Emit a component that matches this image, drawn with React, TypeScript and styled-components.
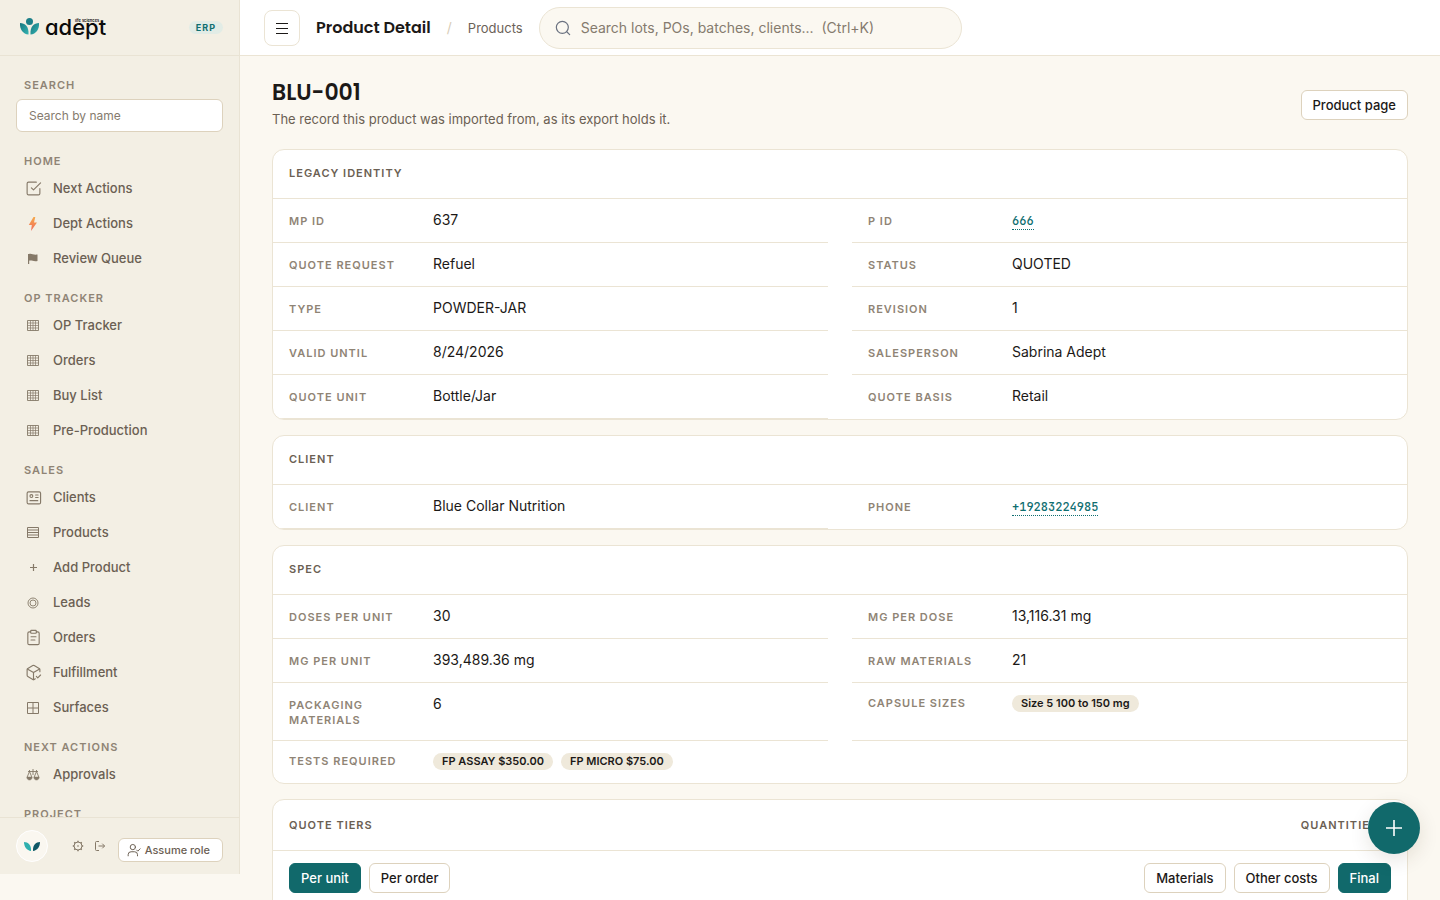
import React from "react";
import styled, { createGlobalStyle, css } from "styled-components";

const color = {
  page: "#fbf8f1",
  side: "#f3efe4",
  sideLine: "#e9e3d4",
  line: "#ebe4d4",
  control: "#ddd2bd",
  ink: "#1c1917",
  text: "#6b6053",
  label: "#8f8475",
  heading: "#6b6053",
  teal: "#11696b",
  link: "#0f6e70",
  chip: "#efe9db",
};

const sans = `Inter, "Liberation Sans", sans-serif`;
const display = `Poppins, Inter, "Liberation Sans", sans-serif`;
const mono = `"JetBrains Mono", "DejaVu Sans Mono", "Liberation Mono", monospace`;

const GlobalStyle = createGlobalStyle`
  *, *::before, *::after { box-sizing: border-box; }
  body { margin: 0; background: ${color.page}; color: ${color.ink}; font: 400 14px/20px ${sans}; }
  button, input { font: inherit; color: inherit; margin: 0; }
  h1, h2, p, dl, dd, ul { margin: 0; padding: 0; }
  ul { list-style: none; }
`;

const Shell = styled.div`
  display: flex;
  height: 100vh;
  overflow: hidden;
`;

const Sidebar = styled.aside`
  flex: 0 0 240px;
  height: calc(100vh - 26px);
  display: flex;
  flex-direction: column;
  background: ${color.side};
  border-right: 1px solid ${color.sideLine};
`;

const Brand = styled.div`
  flex: none;
  height: 56px;
  display: flex;
  align-items: center;
  justify-content: space-between;
  padding: 0 16px 0 20px;
  border-bottom: 1px solid ${color.sideLine};
`;

const ErpTag = styled.span`
  padding: 0 7px;
  border-radius: 7px;
  background: #e2ece6;
  color: ${color.link};
  font-size: 9px;
  line-height: 13px;
  font-weight: 700;
  letter-spacing: 1px;
`;

const SideScroll = styled.nav`
  flex: 1;
  min-height: 0;
  overflow: hidden;
  padding: 19px 16px 0;
`;

const SideLabel = styled.h2`
  display: block;
  padding: 2px 0 0 8px;
  color: ${color.label};
  font-size: 11px;
  line-height: 17px;
  font-weight: 600;
  letter-spacing: 1px;
  text-transform: uppercase;
`;

const SideSearch = styled.input`
  display: block;
  width: 100%;
  height: 33px;
  margin: 5px 0 19px;
  padding: 0 12px;
  border: 1px solid ${color.control};
  border-radius: 6px;
  background: #fff;
  font-size: 12px;
  &::placeholder { color: #857b6e; opacity: 1; }
`;

const NavGroup = styled.section`
  margin-bottom: 13px;
`;

const NavLink = styled.a`
  display: flex;
  align-items: center;
  gap: 11px;
  height: 35px;
  padding-left: 8px;
  color: ${color.text};
  font-size: 13px;
  font-weight: 500;
  text-decoration: none;
`;

const IconSlot = styled.span`
  flex: none;
  width: 18px;
  height: 20px;
  padding-top: 2px;
  display: grid;
  place-items: center;
  color: #857968;
  svg { display: block; }
`;

const SideFooter = styled.div`
  flex: none;
  height: 57px;
  display: flex;
  align-items: center;
  padding: 0 16px;
  border-top: 1px solid ${color.sideLine};
`;

const Avatar = styled.span`
  width: 32px;
  height: 32px;
  margin-right: 24px;
  display: grid;
  place-items: center;
  border: 1px solid #fff;
  border-radius: 50%;
  background: #faf7f0;
`;

const IconButton = styled.button`
  width: 12px;
  height: 20px;
  margin-right: 10px;
  padding: 0;
  display: grid;
  place-items: center;
  border: 0;
  background: none;
  color: #857968;
`;

const RoleButton = styled.button`
  display: flex;
  align-items: center;
  gap: 4px;
  height: 24px;
  margin: 7px 0 0 auto;
  padding: 0 12px 0 8px;
  border: 1px solid ${color.control};
  border-radius: 6px;
  background: #fff;
  color: ${color.text};
  font-size: 11px;
  font-weight: 500;
  white-space: nowrap;
`;

const Content = styled.div`
  flex: 1;
  min-width: 0;
  display: flex;
  flex-direction: column;
`;

const Topbar = styled.header`
  flex: none;
  height: 56px;
  display: flex;
  align-items: center;
  gap: 16px;
  padding: 0 24px;
  background: #fff;
  border-bottom: 1px solid ${color.line};
`;

const MenuButton = styled.button`
  width: 36px;
  height: 36px;
  padding: 0;
  display: grid;
  place-items: center;
  border: 1px solid ${color.line};
  border-radius: 8px;
  background: #fff;
`;

const TopTitle = styled.span`
  font-family: ${display};
  font-size: 16px;
  font-weight: 600;
  line-height: 24px;
  white-space: nowrap;
`;

const Slash = styled.span`
  color: #d8cdb8;
`;

const Crumb = styled.a`
  color: #6b6257;
  font-size: 13px;
  text-decoration: none;
`;

const GlobalSearch = styled.label`
  flex: 0 1 423px;
  height: 42px;
  display: flex;
  align-items: center;
  gap: 10px;
  padding: 0 15px;
  border: 1px solid ${color.line};
  border-radius: 21px;
  background: ${color.page};
  color: #6b7280;
  svg { flex: none; }
  input {
    flex: 1;
    min-width: 0;
    padding: 0;
    border: 0;
    outline: 0;
    background: none;
  }
  input::placeholder { color: #857b6e; opacity: 1; }
`;

const Main = styled.main`
  flex: 1;
  min-height: 0;
  overflow-y: auto;
  scrollbar-width: none;
  padding: 21px 32px 32px;
`;

const PageHead = styled.div`
  display: flex;
  align-items: center;
  justify-content: space-between;
  margin-bottom: 16px;
`;

const PageTitle = styled.h1`
  font-family: ${display};
  font-size: 22px;
  line-height: 32px;
  font-weight: 600;
`;

const PageNote = styled.p`
  padding-bottom: 3px;
  color: ${color.heading};
  font-size: 13px;
  line-height: 21px;
`;

const Button = styled.button<{ $primary?: boolean }>`
  height: 30px;
  padding: 0 11px;
  border: 1px solid ${color.control};
  border-radius: 6px;
  background: #fff;
  color: ${color.ink};
  font-size: 13px;
  line-height: 20px;
  font-weight: 500;
  white-space: nowrap;
  ${(p) =>
    p.$primary &&
    css`
      border-color: ${color.teal};
      background: ${color.teal};
      color: #fff;
    `}
`;

const Cards = styled.div`
  display: grid;
  gap: 15px;
`;

const Card = styled.section`
  overflow: hidden;
  border: 1px solid ${color.line};
  border-radius: 12px;
  background: #fff;
`;

const CardHead = styled.div<{ $tall?: boolean }>`
  display: flex;
  align-items: center;
  justify-content: space-between;
  height: ${(p) => (p.$tall ? 51 : 49)}px;
  padding: 0 16px ${(p) => (p.$tall ? 0 : 2)}px;
  border-bottom: 1px solid ${color.line};
`;

const capsText = css`
  font-size: 11px;
  line-height: 15px;
  font-weight: 600;
  letter-spacing: 1px;
  text-transform: uppercase;
`;

const CardTitle = styled.h2`
  ${capsText}
  color: ${color.heading};
`;

const GhostButton = styled.button`
  padding: 0 12px;
  border: 1px solid transparent;
  background: none;
  && { ${capsText} color: ${color.heading}; }
`;

const Fields = styled.dl`
  display: grid;
  grid-template-columns: 1fr 1fr;
  column-gap: 24px;
`;

const Field = styled.div`
  display: grid;
  grid-template-columns: 128px 1fr;
  column-gap: 16px;
  align-items: start;
  padding: 11px 16px 12px;
  border-bottom: 1px solid ${color.line};
  &:last-child { border-bottom: 0; }
  dt {
    ${capsText}
    padding-top: 4px;
    color: ${color.label};
  }
  dd { line-height: 20px; }
`;

const ChipField = styled(Field)`
  padding: 12px 16px 13px;
  dt { padding-top: 1px; }
  dd { display: flex; gap: 8px; line-height: 17px; }
`;

const Chip = styled.span`
  padding: 0 9px;
  border-radius: 9px;
  background: ${color.chip};
  font-size: 11px;
  line-height: 17px;
  font-weight: 600;
`;

const MonoLink = styled.a`
  border-bottom: 1px dotted ${color.link};
  color: ${color.link};
  font: 500 12px/17px ${mono};
  text-decoration: none;
`;

const Toolbar = styled.div`
  display: flex;
  justify-content: space-between;
  padding: 12px 16px 60px;
`;

const ButtonRow = styled.div`
  display: flex;
  gap: 8px;
`;

const Fab = styled.button`
  position: fixed;
  right: 20px;
  bottom: 46px;
  width: 52px;
  height: 52px;
  padding: 0;
  display: grid;
  place-items: center;
  border: 0;
  border-radius: 50%;
  background: ${color.teal};
  color: #fff;
  box-shadow: 0 6px 20px rgba(60, 40, 20, 0.12);
`;

const LogoMark = styled.svg`
  display: block;
  overflow: visible;
`;

const Wordmark = styled.text`
  font-family: ${sans};
  font-size: 22px;
  font-weight: 500;
  font-feature-settings: "cv11";
  fill: #0b0b0b;
`;

const Tagline = styled.text`
  font-family: ${sans};
  font-size: 4px;
  font-weight: 600;
  fill: #0b0b0b;
`;

const Stroke = ({ size = 17, width = 1.6, children }: { size?: number; width?: number; children: React.ReactNode }) => (
  <svg width={size} height={size} viewBox="0 0 24 24" fill="none" stroke="currentColor" strokeWidth={width} strokeLinecap="round" strokeLinejoin="round" aria-hidden="true">
    {children}
  </svg>
);

const Logo = () => (
  <LogoMark width="92" height="28" viewBox="0 0 92 28" role="img" aria-label="adept life sciences">
    <defs>
      <linearGradient id="leaf" x1="0" y1="0" x2="1" y2="1">
        <stop offset="0" stopColor="#17767f" />
        <stop offset="1" stopColor="#35b5b3" />
      </linearGradient>
    </defs>
    <circle cx="9.5" cy="7.5" r="3.5" fill="#1c7f88" />
    <path d="M0 9C5 9.500 9 12 8.500 20.500C3 20-.5 15.500 0 9Z" fill="url(#leaf)" />
    <path d="M19 9C14 9.500 10 12 10.500 20.500C16 20 19.500 15.500 19 9Z" fill="url(#leaf)" />
    <Wordmark x="25" y="21">adept</Wordmark>
    <Tagline x="55" y="8">life sciences</Tagline>
  </LogoMark>
);

const icons: Record<string, React.ReactNode> = {
  check: (
    <Stroke>
      <path d="m9 11 3 3L22 4" />
      <path d="M21 12v7a2 2 0 0 1-2 2H5a2 2 0 0 1-2-2V5a2 2 0 0 1 2-2h11" />
    </Stroke>
  ),
  bolt: (
    <svg width="14" height="16" viewBox="0 0 14 16" aria-hidden="true">
      <defs>
        <linearGradient id="bolt" x1="0" y1="0" x2="0" y2="1">
          <stop offset="0" stopColor="#f5a94a" />
          <stop offset="1" stopColor="#f26b5e" />
        </linearGradient>
      </defs>
      <path d="M7.500 1 2.800 9h3L5 15l6-8.500H8L9.300 1Z" fill="url(#bolt)" />
    </svg>
  ),
  flag: (
    <svg width="12" height="12" viewBox="0 0 12 12" fill="currentColor" aria-hidden="true">
      <path d="M1 1h1.200v10H1zM2 1c3-.8 4 1.200 8.500.5v6.500C6 8.700 5 7 2 7.700Z" />
    </svg>
  ),
  grid: (
    <svg width="12" height="11" viewBox="0 0 12 11" stroke="currentColor" fill="none" aria-hidden="true">
      <path d="M.5.5h11v10H.5z" strokeWidth="0.9" />
      <path d="M3.500.5v10M6 .5v10M8.500.5v10M.5 3h11M.5 5.500h11M.5 8h11" strokeWidth="0.7" />
    </svg>
  ),
  rows: (
    <svg width="12" height="11" viewBox="0 0 12 11" stroke="currentColor" fill="none" aria-hidden="true">
      <path d="M.5.5h11v10H.5z" />
      <path d="M.5 3h11M.5 5.500h11M.5 8h11" />
    </svg>
  ),
  ring: (
    <svg width="12" height="12" viewBox="0 0 12 12" stroke="currentColor" fill="none" aria-hidden="true">
      <circle cx="6" cy="6" r="5" strokeWidth="0.9" />
      <circle cx="6" cy="6" r="3" strokeWidth="0.9" />
    </svg>
  ),
  plus: (
    <svg width="9" height="9" viewBox="0 0 9 9" stroke="currentColor" strokeWidth="1.2" fill="none" aria-hidden="true">
      <path d="M4.500 1v7M1 4.500h7" />
    </svg>
  ),
  id: (
    <Stroke>
      <rect x="3" y="4" width="19" height="17" rx="2" />
      <circle cx="9" cy="10" r="2" />
      <path d="M15 8.500h3.500M15 12h3.500M7 16.500h11" />
    </Stroke>
  ),
  clipboard: (
    <Stroke>
      <rect x="8" y="2" width="8" height="4" rx="1" />
      <path d="M16 4h2a2 2 0 0 1 2 2v14a2 2 0 0 1-2 2H6a2 2 0 0 1-2-2V6a2 2 0 0 1 2-2h2M8.500 11h7M8.500 15.500h5.500" />
    </Stroke>
  ),
  box: (
    <Stroke>
      <path d="M21 11V8a2 2 0 0 0-1-1.730l-7-4a2 2 0 0 0-2 0l-7 4A2 2 0 0 0 3 8v8a2 2 0 0 0 1 1.730l7 4a2 2 0 0 0 2 0l1.500-.9" />
      <path d="M3.300 7 12 12l8.700-5M12 22V12M16 17.500l2 2 4-4" />
    </Stroke>
  ),
  window: (
    <svg width="14" height="14" viewBox="0 0 14 14" stroke="currentColor" fill="none" aria-hidden="true">
      <path d="M1.500 1.500h11v11h-11zM7 1.500v11M1.500 7h11" />
    </svg>
  ),
  scales: (
    <svg width="14" height="12" viewBox="0 0 14 12" stroke="currentColor" fill="none" aria-hidden="true">
      <path d="M7 0v6M2 2.500h10M3.500 2.500 1.200 8M3.500 2.500 5.800 8M10.500 2.500 8.200 8M10.500 2.500 12.800 8M3.500 1v2M10.500 1v2" strokeWidth="0.9" />
      <path d="M.8 8h5.400c0 4-5.400 4-5.400 0ZM7.800 8h5.400c0 4-5.400 4-5.400 0Z" fill="currentColor" strokeWidth="0.5" />
    </svg>
  ),
};

const groups: { title: string; items: [string, string][] }[] = [
  { title: "Home", items: [["check", "Next Actions"], ["bolt", "Dept Actions"], ["flag", "Review Queue"]] },
  { title: "OP Tracker", items: [["grid", "OP Tracker"], ["grid", "Orders"], ["grid", "Buy List"], ["grid", "Pre-Production"]] },
  {
    title: "Sales",
    items: [
      ["id", "Clients"],
      ["rows", "Products"],
      ["plus", "Add Product"],
      ["ring", "Leads"],
      ["clipboard", "Orders"],
      ["box", "Fulfillment"],
      ["window", "Surfaces"],
    ],
  },
  { title: "Next Actions", items: [["scales", "Approvals"]] },
  { title: "Project", items: [] },
];

type Entry = { label: string; value?: string; link?: string; chips?: string[] };

const identity: Entry[] = [
  { label: "MP ID", value: "637" },
  { label: "P ID", link: "666" },
  { label: "Quote request", value: "Refuel" },
  { label: "Status", value: "QUOTED" },
  { label: "Type", value: "POWDER-JAR" },
  { label: "Revision", value: "1" },
  { label: "Valid until", value: "8/24/2026" },
  { label: "Salesperson", value: "Sabrina Adept" },
  { label: "Quote unit", value: "Bottle/Jar" },
  { label: "Quote basis", value: "Retail" },
];

const client: Entry[] = [
  { label: "Client", value: "Blue Collar Nutrition" },
  { label: "Phone", link: "+19283224985" },
];

const spec: Entry[] = [
  { label: "Doses per unit", value: "30" },
  { label: "Mg per dose", value: "13,116.31 mg" },
  { label: "Mg per unit", value: "393,489.36 mg" },
  { label: "Raw materials", value: "21" },
  { label: "Packaging materials", value: "6" },
  { label: "Capsule sizes", chips: ["Size 5 100 to 150 mg"] },
  { label: "Tests required", chips: ["FP ASSAY $350.00", "FP MICRO $75.00"] },
];

const FieldCard = ({ title, entries }: { title: string; entries: Entry[] }) => (
  <Card>
    <CardHead>
      <CardTitle>{title}</CardTitle>
    </CardHead>
    <Fields>
      {entries.map((e) =>
        e.chips ? (
          <ChipField key={e.label}>
            <dt>{e.label}</dt>
            <dd>
              {e.chips.map((c) => (
                <Chip key={c}>{c}</Chip>
              ))}
            </dd>
          </ChipField>
        ) : (
          <Field key={e.label}>
            <dt>{e.label}</dt>
            <dd>{e.link ? <MonoLink href="#">{e.link}</MonoLink> : e.value}</dd>
          </Field>
        )
      )}
    </Fields>
  </Card>
);

export default function App() {
  return (
    <>
      <GlobalStyle />
      <Shell>
        <Sidebar>
          <Brand>
            <Logo />
            <ErpTag>ERP</ErpTag>
          </Brand>
          <SideScroll aria-label="Main">
            <SideLabel as="label" htmlFor="side-search">
              Search
            </SideLabel>
            <SideSearch id="side-search" placeholder="Search by name" />
            {groups.map((g) => (
              <NavGroup key={g.title}>
                <SideLabel>{g.title}</SideLabel>
                <ul>
                  {g.items.map(([icon, label]) => (
                    <li key={label}>
                      <NavLink href="#">
                        <IconSlot>{icons[icon]}</IconSlot>
                        {label}
                      </NavLink>
                    </li>
                  ))}
                </ul>
              </NavGroup>
            ))}
          </SideScroll>
          <SideFooter>
            <Avatar>
              <svg width="18" height="12" viewBox="0 0 18 12" aria-hidden="true">
                <path d="M1 2c4 0 7.500 3 7 9C4 10.500 1 7 1 2Z" fill="#2fb0ae" />
                <path d="M17 2c-4 0-7.500 3-7 9 4-.5 7-4 7-9Z" fill="#0f5866" />
              </svg>
            </Avatar>
            <IconButton aria-label="Settings">
              <svg width="12" height="12" viewBox="0 0 12 12" stroke="currentColor" fill="none" aria-hidden="true">
                <circle cx="6" cy="6" r="4" />
                <path d="M6 .8v1.200M6 10v1.200M.8 6H2M10 6h1.200M2.300 2.300l.9.9M8.800 8.800l.9.9M2.300 9.700l.9-.9M8.800 3.200l.9-.9" strokeWidth="1.4" />
                <circle cx="6" cy="6" r=".8" fill="currentColor" stroke="none" />
              </svg>
            </IconButton>
            <IconButton aria-label="Sign out">
              <svg width="12" height="12" viewBox="0 0 12 12" stroke="currentColor" fill="none" aria-hidden="true">
                <path d="M5 1.500H2.500q-1 0-1 1v7q0 1 1 1H5M4.500 6h6M8.300 3.700 10.600 6 8.300 8.300" />
              </svg>
            </IconButton>
            <RoleButton>
              <Stroke size={14} width={1.7}>
                <circle cx="10" cy="7" r="4.5" />
                <path d="M2 22v-2a5 5 0 0 1 5-5h6a5 5 0 0 1 5 5v2M16.500 12l2 2 4-4" />
              </Stroke>
              Assume role
            </RoleButton>
          </SideFooter>
        </Sidebar>

        <Content>
          <Topbar>
            <MenuButton aria-label="Toggle menu">
              <svg width="14" height="14" viewBox="0 0 14 14" stroke="currentColor" aria-hidden="true">
                <path d="M1 2.500h12M1 7.500h12M1 12.500h12" />
              </svg>
            </MenuButton>
            <TopTitle>Product Detail</TopTitle>
            <Slash>/</Slash>
            <Crumb href="#">Products</Crumb>
            <GlobalSearch>
              <Stroke size={16} width={1.8}>
                <circle cx="11" cy="11" r="9" />
                <path d="m18 18 4 4" />
              </Stroke>
              <input aria-label="Search everything" placeholder="Search lots, POs, batches, clients...&nbsp; (Ctrl+K)" />
            </GlobalSearch>
          </Topbar>

          <Main>
            <PageHead>
              <div>
                <PageTitle>BLU-001</PageTitle>
                <PageNote>The record this product was imported from, as its export holds it.</PageNote>
              </div>
              <Button>Product page</Button>
            </PageHead>
            <Cards>
              <FieldCard title="Legacy identity" entries={identity} />
              <FieldCard title="Client" entries={client} />
              <FieldCard title="Spec" entries={spec} />
              <Card>
                <CardHead $tall>
                  <CardTitle>Quote tiers</CardTitle>
                  <GhostButton>Quantities</GhostButton>
                </CardHead>
                <Toolbar>
                  <ButtonRow>
                    <Button $primary>Per unit</Button>
                    <Button>Per order</Button>
                  </ButtonRow>
                  <ButtonRow>
                    <Button>Materials</Button>
                    <Button>Other costs</Button>
                    <Button $primary>Final</Button>
                  </ButtonRow>
                </Toolbar>
              </Card>
            </Cards>
          </Main>
        </Content>
        <Fab aria-label="Create new">
          <svg width="18" height="18" viewBox="0 0 18 18" stroke="currentColor" strokeWidth="1.6" aria-hidden="true">
            <path d="M9 1v16M1 9h16" />
          </svg>
        </Fab>
      </Shell>
    </>
  );
}
